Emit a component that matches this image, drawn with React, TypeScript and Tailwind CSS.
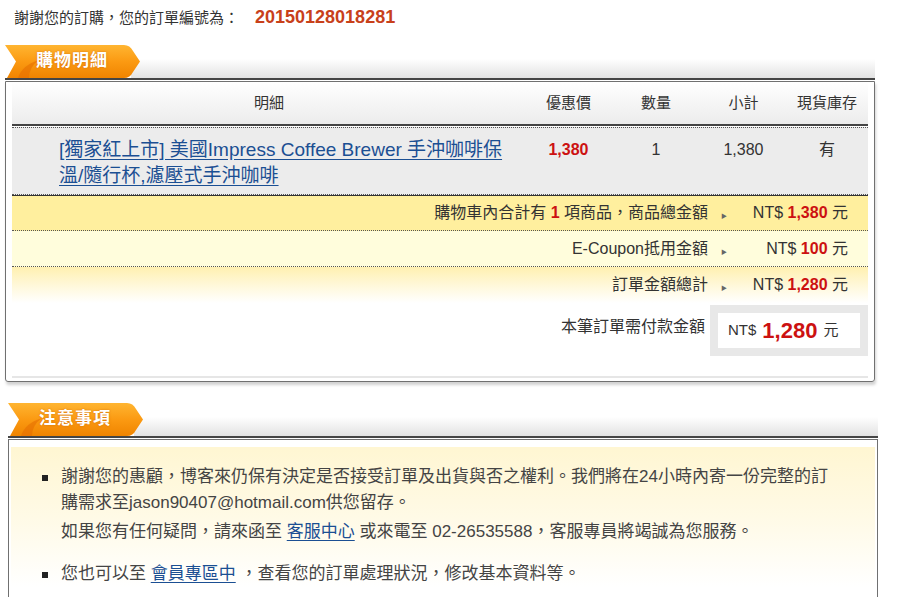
import React from 'react';

const font = "font-['Liberation_Sans','Noto_Sans_CJK_TC',sans-serif]";

const Tab = ({ label, id }: { label: string; id: string }) => (
  <div className="relative z-10 h-[33px] w-[136px] shrink-0">
    <svg width="136" height="33" viewBox="0 0 136 33" className="absolute inset-0">
      <defs>
        <linearGradient id={id} x1="0" y1="0" x2="0" y2="1">
          <stop offset="0" stopColor="#ffb531" />
          <stop offset="0.5" stopColor="#fb9a12" />
          <stop offset="1" stopColor="#f08400" />
        </linearGradient>
      </defs>
      <path d="M0 0 H119 Q125 0 128 6 L135 16.5 L128 27 Q125 33 119 33 H2 L11 16.5 Z" fill={`url(#${id})`} />
      <path d="M13 33 Q17 20 34 15 Q24 22 24 33 Z" fill="#e46c00" opacity="0.55" />
    </svg>
    <span className="absolute left-[31px] top-[4px] text-[17px] font-bold leading-[24px] tracking-[1px] text-white [text-shadow:0_0_2px_rgba(180,80,0,0.6)]">
      {label}
    </span>
  </div>
);

const SectionHead = ({ label, id, h }: { label: string; id: string; h: string }) => (
  <>
    <div className={`flex items-end ${h}`}>
      <Tab label={label} id={id} />
      <div className="-ml-[10px] h-[19px] flex-1 bg-gradient-to-b from-white to-[#e2e2e2]" />
    </div>
    <div className="h-[2px] bg-[#454545]" />
    <div className="h-px" />
  </>
);

const Arrow = () => <span className="text-[6px] text-[#666]">▶</span>;

const SumRow = ({ label, value, cls }: { label: React.ReactNode; value: string; cls: string }) => (
  <div className={`flex items-center pr-[20px] text-[16px] ${cls}`}>
    <div className="flex-1 text-right">{label}</div>
    <div className="w-[32px] text-center leading-none">
      <Arrow />
    </div>
    <div className="w-[108px] text-right">
      NT$ <b className="text-[#cc1111]">{value}</b> 元
    </div>
  </div>
);

export default function App() {
  return (
    <div className={`h-[597px] w-[898px] overflow-hidden bg-white text-[#333] ${font}`}>
      <div className="h-[46px] pl-[14px] pt-[6px] text-[15px] leading-[22px]">
        謝謝您的訂購，您的訂單編號為：
        <span className="ml-[16px] text-[18px] font-bold text-[#c8401a]">20150128018281</span>
      </div>

      <div className="ml-[5px] w-[870px]">
        <SectionHead label="購物明細" id="t1" h="h-[32px]" />
        <div className="rounded-b-[3px] border border-[#707070] px-[6px] shadow-[1px_3px_3px_rgba(0,0,0,0.18)]">
          <div className="grid h-[42px] grid-cols-[514px_85px_90px_85px_82px] items-center bg-gradient-to-b from-white to-[#ececec] text-center text-[15px]">
            <div>明細</div>
            <div>優惠價</div>
            <div>數量</div>
            <div>小計</div>
            <div>現貨庫存</div>
          </div>
          <div className="h-[2px] bg-[#444]" />
          <div className="mt-px grid h-[68px] grid-cols-[514px_85px_90px_85px_82px] border-y border-dotted border-[#555] bg-[#ececec] pt-[9px] text-[16px] leading-[26px]">
            <div className="pl-[47px] text-[19px]">
              <a href="#" className="text-[#1b4f93] underline underline-offset-[3px]">
                [獨家紅上市] 美國Impress Coffee Brewer 手沖咖啡保
                <br />
                溫/隨行杯,濾壓式手沖咖啡
              </a>
            </div>
            <div className="text-center font-bold text-[#cc1111]">1,380</div>
            <div className="text-center">1</div>
            <div className="text-center">1,380</div>
            <div className="text-center">有</div>
          </div>
          <div className="h-px bg-[#333]" />
          <SumRow
            cls="h-[35px] border-b border-dotted border-[#555] bg-[#ffef9e]"
            label={
              <>
                購物車內合計有 <b className="text-[#cc1111]">1</b> 項商品，商品總金額
              </>
            }
            value="1,380"
          />
          <SumRow cls="h-[36px] border-b border-dotted border-[#555] bg-[#fffddc]" label="E-Coupon抵用金額" value="100" />
          <SumRow cls="h-[36px] bg-gradient-to-b from-[#fff0b0] to-white" label="訂單金額總計" value="1,280" />
          <div className="mt-[2px] flex justify-end">
            <div className="pr-[5px] pt-[11px] text-[16px] leading-[22px]">本筆訂單需付款金額</div>
            <div className="h-[51px] w-[158px] bg-[#e8e8e8] p-[8px]">
              <div className="flex h-full items-center bg-white pl-[10px]">
                <span className="text-[15px]">NT$</span>
                <b className="ml-[6px] text-[22px] text-[#cc1111]">1,280</b>
                <span className="ml-[6px] text-[15px]">元</span>
              </div>
            </div>
          </div>
          <div className="h-[22px] border-b-2 border-[#e6e6e6]" />
          <div className="h-[3px]" />
        </div>
      </div>

      <div className="ml-[8px] mt-[23px] w-[870px]">
        <SectionHead label="注意事項" id="t2" h="h-[31px]" />
        <div className="h-[200px] border-x border-t border-[#707070] px-[2px] pt-[7px]">
          <div className="bg-gradient-to-b from-[#fff6d2] via-[#fffae6] to-white pt-[17px] text-[17px] leading-[26px] text-[#444]">
            <div className="flex">
              <span className="ml-[31px] mr-[13px] mt-[11px] h-[6px] w-[6px] shrink-0 bg-[#222]" />
              <div>
                謝謝您的惠顧，博客來仍保有決定是否接受訂單及出貨與否之權利。我們將在24小時內寄一份完整的訂
                <br />
                購需求至jason90407@hotmail.com供您留存。
                <div className="mt-[3px]">
                  如果您有任何疑問，請來函至{' '}
                  <a href="#" className="text-[#1b4f93] underline underline-offset-[3px]">
                    客服中心
                  </a>{' '}
                  或來電至 02-26535588，客服專員將竭誠為您服務。
                </div>
              </div>
            </div>
            <div className="mt-[16px] flex">
              <span className="ml-[31px] mr-[13px] mt-[11px] h-[6px] w-[6px] shrink-0 bg-[#222]" />
              <div>
                您也可以至{' '}
                <a href="#" className="text-[#1b4f93] underline underline-offset-[3px]">
                  會員專區中
                </a>{' '}
                ，查看您的訂單處理狀況，修改基本資料等。
              </div>
            </div>
          </div>
        </div>
      </div>
    </div>
  );
}
